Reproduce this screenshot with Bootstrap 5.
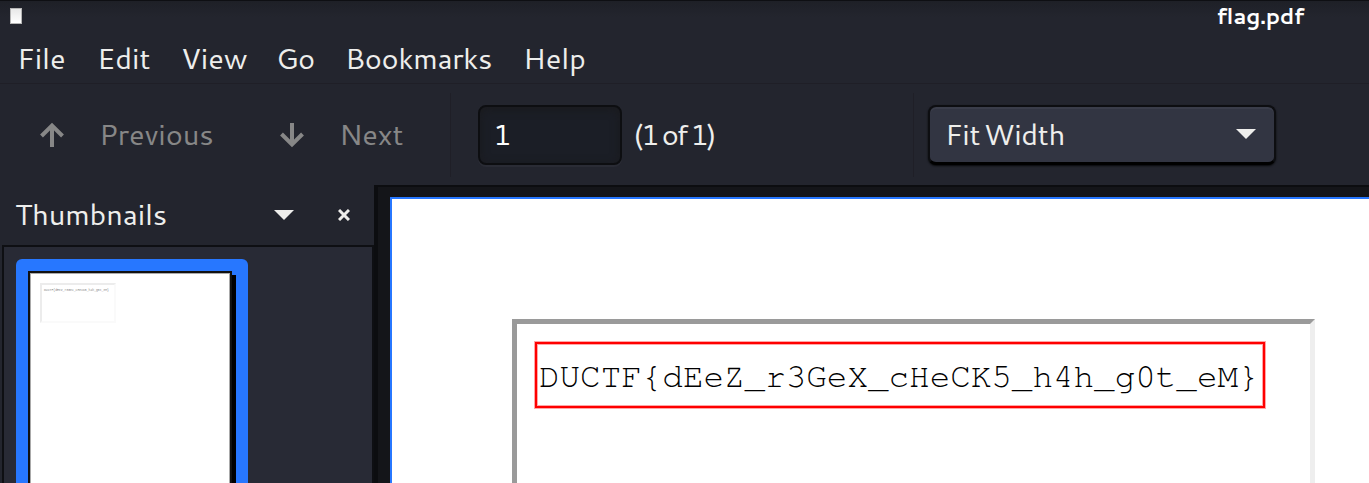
<!DOCTYPE html>
<html lang="en">
<head>
<meta charset="utf-8">
<title>flag.pdf</title>
<link href="https://cdn.jsdelivr.net/npm/bootstrap@5.3.0/dist/css/bootstrap.min.css" rel="stylesheet">
<style>
body{background:#23252e;color:#eeeeec;font-family:Cantarell,"Noto Sans","Open Sans",sans-serif;font-size:29px;line-height:38px;font-weight:400;height:483px;overflow:hidden;white-space:nowrap}
.titlebar,.menubar,.toolbar,.toolbar>*,.toolbar svg{flex-shrink:0}
.titlebar{height:30px;background:linear-gradient(#1e2027,#23252e 16px);border-top:1px solid #0e0f13;padding:0 65px 0 10px}
.titlebar strong{font-size:22px;line-height:29px;font-weight:700;color:#fff;letter-spacing:-.4px}
.app-icon{width:12px;height:16px;background:linear-gradient(#e8e8e8,#fff);border:1px solid #b5b5b5;margin-top:1px}
.menubar{height:54px;padding-left:17px;border-bottom:1px solid #1f1f27}
.menubar .nav-link{padding:0;color:inherit;line-height:56px}
.menu-file{width:80px}.menu-edit{width:84px}.menu-view{width:95px}.menu-go{width:69px;letter-spacing:-.5px}.menu-bookmarks{width:178px;letter-spacing:-.35px}
.toolbar{height:101px}
.step-prev,.step-next{color:#878787;padding-left:39px;gap:34px}
.step-prev{width:240px}
.step-next{width:210px}
.step-prev span,.step-next span,.page-total,.side-head span{padding-bottom:2px;letter-spacing:-.15px}
.sep{width:1px;height:84px;background:#1f1f27}
.page-input{width:144px;height:60px;margin-left:27px;border:2px solid #0d0e11;border-radius:8px;background:#1b1e26;color:#fff;font:inherit;padding:0 15px 2px 13px;box-shadow:inset 0 2px 10px #1a1a1d,0 2px 0 #2a2c35}
.toolbar .page-total{margin-left:11px;width:280px;letter-spacing:-2.400px;word-spacing:-1px}
.zoom-btn{width:348px;height:60px;margin-left:14px;border:2px solid #0d0e11;border-bottom-width:3px;border-bottom-color:#000;border-radius:8px;background:#323542;color:inherit;font:inherit;letter-spacing:-.3px;word-spacing:-4px;padding:0 18px 0 15px;box-shadow:inset 0 2px 0 #3a3d4a,0 1px 2px #08090b}
main{min-height:0;overflow:hidden}
.side{width:374px}
.side-head{height:60px;padding:0 24px 0 15px}
.close-x{margin-left:44px}
.thumbs{height:238px;margin-left:2px;background:#282a35;border:solid #0e0f13;border-width:2px 2px 0 2px;padding:12px 12px 0;overflow:hidden}
.thumb{width:232px;height:224px;background:#2777ff;border-radius:6px 6px 0 0;padding:12px 12px 0}
.thumb-page{width:204px;height:216px;background:#fff;border:2px solid #111;border-bottom:0;box-shadow:4px 4px 0 #000,inset 0 0 0 1px #aaa;padding:10px 0 0 10px}
.mini{width:76px;height:40px;border:2px solid #ececec;border-right-color:#fafafa;border-bottom-color:#fafafa;font:3.100px/10px "Liberation Mono",monospace;color:#888;padding-left:2px}
.view{background:#141519;border:solid #0c0d10;border-width:2px 0 0 4px;padding:10px 0 0 12px}
.sheet{height:286px;background:#fff;border:solid #2777ff;border-width:2px 0 0 2px;padding:120px 0 0 120px}
.frame{width:803px;height:164px;border:5px solid #9a9a9a;border-right-color:#eee;border-bottom:0;padding:18px 0 0 18px}
.flag{width:730px;height:66px;border:2px solid #f00;box-shadow:0 0 0 1px #ff000059,inset 0 0 0 1px #ff000059;color:#000;font:400 34.270px/63px FreeMono,"Nimbus Mono PS","Liberation Mono",monospace;padding:2px 0 0 2px}
</style>
</head>
<body class="d-flex flex-column">
<header class="titlebar d-flex justify-content-between align-items-center"><span class="app-icon"></span><strong>flag.pdf</strong></header>
<nav class="menubar nav flex-nowrap">
<a class="nav-link menu-file">File</a><a class="nav-link menu-edit">Edit</a><a class="nav-link menu-view">View</a><a class="nav-link menu-go">Go</a><a class="nav-link menu-bookmarks">Bookmarks</a><a class="nav-link menu-help">Help</a>
</nav>
<div class="toolbar d-flex align-items-center">
<div class="step-prev d-flex align-items-center"><svg width="26" height="26" viewBox="0 0 26 26" fill="none" stroke="currentColor" stroke-width="4"><path d="M13 25V4M2.500 14 13 3.500 23.500 14"/></svg><span>Previous</span></div>
<div class="step-next d-flex align-items-center"><svg width="26" height="26" viewBox="0 0 26 26" fill="none" stroke="currentColor" stroke-width="4"><path d="M13 1V22M2.500 12 13 22.500 23.500 12"/></svg><span>Next</span></div>
<span class="sep"></span>
<input class="page-input" value="1" aria-label="Page">
<span class="page-total">(1 of 1)</span>
<span class="sep"></span>
<button class="zoom-btn d-flex align-items-center justify-content-between"><span>Fit Width</span><svg width="20" height="10" fill="#eeeeec"><path d="M0 0h20L10 10z"/></svg></button>
</div>
<main class="d-flex flex-grow-1">
<aside class="side flex-shrink-0">
<div class="side-head d-flex align-items-center"><span class="me-auto">Thumbnails</span><svg width="20" height="10" fill="#eeeeec"><path d="M0 0h20L10 10z"/></svg><svg class="close-x" width="12" height="12" stroke="#eeeeec" stroke-width="3"><path d="M1 1 11 11M11 1 1 11"/></svg></div>
<div class="thumbs"><div class="thumb"><div class="thumb-page"><div class="mini">DUCTF{dEeZ_r3GeX_cHeCK5_h4h_g0t_eM}</div></div></div></div>
</aside>
<section class="view flex-grow-1"><div class="sheet"><div class="frame"><div class="flag">DUCTF{dEeZ_r3GeX_cHeCK5_h4h_g0t_eM}</div></div></div></section>
</main>
<script src="https://cdn.jsdelivr.net/npm/bootstrap@5.3.0/dist/js/bootstrap.bundle.min.js"></script>
</body>
</html>
